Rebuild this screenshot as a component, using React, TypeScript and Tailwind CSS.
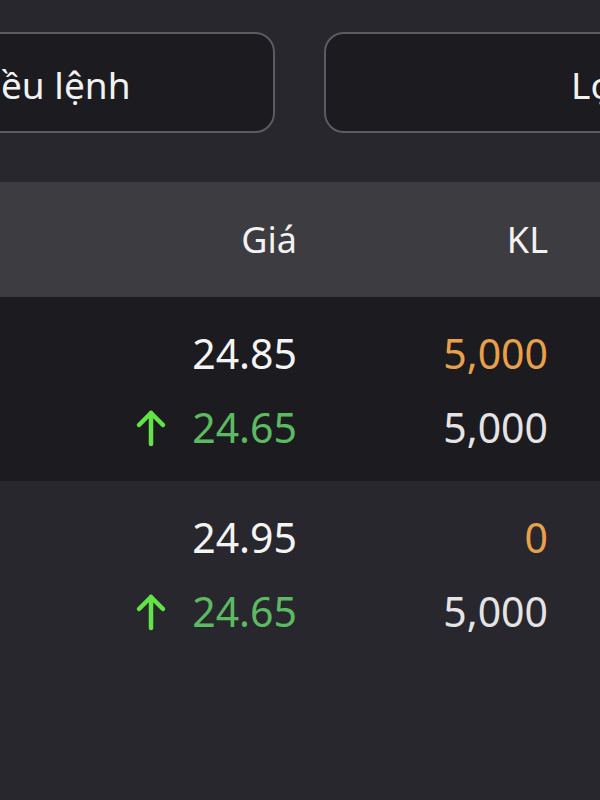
import React from "react";

type Row = { price: string; vol: string; up?: boolean; volTone: "orange" | "white" };

const groups: { bg: string; rows: Row[] }[] = [
  {
    bg: "bg-[#1c1b1f]",
    rows: [
      { price: "24.85", vol: "5,000", volTone: "orange" },
      { price: "24.65", vol: "5,000", up: true, volTone: "white" },
    ],
  },
  {
    bg: "bg-[#28272d]",
    rows: [
      { price: "24.95", vol: "0", volTone: "orange" },
      { price: "24.65", vol: "5,000", up: true, volTone: "white" },
    ],
  },
];

function UpArrow() {
  return (
    <svg width="32" height="38" viewBox="0 0 32 38" fill="none" stroke="#62e346" strokeWidth="4.5" strokeLinecap="round" strokeLinejoin="round">
      <path d="M4 16 L16 4 L28 16" />
      <path d="M16 4 V35" />
    </svg>
  );
}

export default function App() {
  return (
    <div
      className="w-[600px] h-[800px] overflow-hidden bg-[#28272d] text-[#f2f2f2]"
      style={{ fontFamily: '"Noto Sans", "Open Sans", sans-serif' }}
    >
      {/* top buttons */}
      <div className="h-[182px] pt-[32px] flex gap-[49px]">
        <div className="shrink-0 -ml-[45px] w-[320px] h-[101px] rounded-[20px] border-2 border-[#5c5b60] bg-[#1c1b1f] flex items-center pl-[44px] pt-[3px]">
          <span className="text-[37px] leading-none">ều lệnh</span>
        </div>
        <div className="shrink-0 w-[320px] h-[101px] rounded-[20px] border-2 border-[#5c5b60] bg-[#1c1b1f] flex items-center pl-[245px] pt-[3px]">
          <span className="text-[37px] leading-none whitespace-nowrap">Lọc</span>
        </div>
      </div>

      {/* header */}
      <div className="h-[115px] bg-[#3d3c41] flex items-center justify-end pr-[52px] text-[36px]">
        <div className="w-[200px] text-right">Giá</div>
        <div className="w-[251px] text-right">KL</div>
      </div>

      {groups.map((g, gi) => (
        <div key={gi} className={`${g.bg} pt-[20px] pb-[16px]`}>
          {g.rows.map((r, ri) => (
            <div key={ri} className="h-[74px] flex items-center justify-end pr-[52px] text-[41px]">
              <div className="w-[200px] flex items-center justify-end gap-[25px]">
                {r.up && <UpArrow />}
                <span className={r.up ? "text-[#5cbb62]" : "text-[#f4f4f4]"}>{r.price}</span>
              </div>
              <div className={`w-[251px] text-right ${r.volTone === "orange" ? "text-[#e9a04c]" : "text-[#e4e4e6]"}`}>
                {r.vol}
              </div>
            </div>
          ))}
        </div>
      ))}
    </div>
  );
}
